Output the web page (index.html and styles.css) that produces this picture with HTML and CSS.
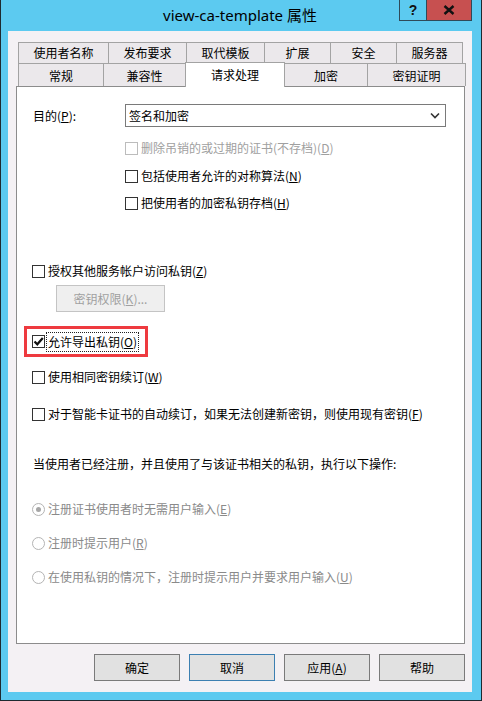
FILE: index.html
```html
<!DOCTYPE html>
<html lang="zh-CN">
<head>
<meta charset="utf-8">
<title>view-ca-template 属性</title>
<link rel="stylesheet" href="styles.css">
</head>
<body>
<div class="window">
  <div class="titlebar">
    <span></span>
    <div class="title">view-ca-template 属性</div>
    <div class="controls">
      <div class="ctl ctl-help">?</div>
      <div class="ctl ctl-close">
        <svg width="12" height="10" viewBox="0 0 12 10"><path d="M1.5 1 L10.5 9 M10.5 1 L1.5 9" stroke="#111" stroke-width="2.4" fill="none"/></svg>
      </div>
    </div>
  </div>
  <div class="client">
    <div class="tabrow row1">
      <div class="tab w91">使用者名称</div>
      <div class="tab w79">发布要求</div>
      <div class="tab w79">取代模板</div>
      <div class="tab w67">扩展</div>
      <div class="tab w67">安全</div>
      <div class="tab w67">服务器</div>
    </div>
    <div class="tabrow row2">
      <div class="tab w86">常规</div>
      <div class="tab w83">兼容性</div>
      <div class="tab tab-sel w100">请求处理</div>
      <div class="tab w84">加密</div>
      <div class="tab w99">密钥证明</div>
    </div>
    <div class="panel">
      <div class="row purpose">
        <span class="label">目的(<u>P</u>):</span>
        <div class="combo">
          <span>签名和加密</span>
          <svg width="10" height="7" viewBox="0 0 10 7"><path d="M1 1.5 L5 5.5 L9 1.5" stroke="#333" stroke-width="1.6" fill="none"/></svg>
        </div>
      </div>
      <div class="row indent disabled mt11">
        <span class="cb cb-dis"></span><span>删除吊销的或过期的证书(不存档)(<u>D</u>)</span>
      </div>
      <div class="row indent mt8">
        <span class="cb"></span><span>包括使用者允许的对称算法(<u>N</u>)</span>
      </div>
      <div class="row indent mt7">
        <span class="cb"></span><span>把使用者的加密私钥存档(<u>H</u>)</span>
      </div>
      <div class="row mt48">
        <span class="cb"></span><span>授权其他服务帐户访问私钥(<u>Z</u>)</span>
      </div>
      <div class="keybtn">密钥权限(<u>K</u>)...</div>
      <div class="highlight">
        <span class="cb">
          <svg width="11" height="11" viewBox="0 0 11 11"><path d="M1.5 5.5 L4.3 8.3 L9.8 2" stroke="#111" stroke-width="2.2" fill="none"/></svg>
        </span><span class="focus">允许导出私钥(<u>O</u>)</span>
      </div>
      <div class="row mt10">
        <span class="cb"></span><span>使用相同密钥续订(<u>W</u>)</span>
      </div>
      <div class="row mt17">
        <span class="cb"></span><span>对于智能卡证书的自动续订，如果无法创建新密钥，则使用现有密钥(<u>F</u>)</span>
      </div>
      <div class="row note mt30">当使用者已经注册，并且使用了与该证书相关的私钥，执行以下操作:</div>
      <div class="row disabled2 mt25">
        <span class="rb rb-on"></span><span>注册证书使用者时无需用户输入(<u>E</u>)</span>
      </div>
      <div class="row disabled2 mt14">
        <span class="rb"></span><span>注册时提示用户(<u>R</u>)</span>
      </div>
      <div class="row disabled2 mt14">
        <span class="rb"></span><span>在使用私钥的情况下，注册时提示用户并要求用户输入(<u>U</u>)</span>
      </div>
    </div>
    <div class="buttons">
      <div class="btn">确定</div>
      <div class="btn btn-default">取消</div>
      <div class="btn">应用(<u>A</u>)</div>
      <div class="btn">帮助</div>
    </div>
  </div>
</div>
</body>
</html>
```

FILE: styles.css
```css
* { box-sizing: border-box; }
html, body { margin: 0; padding: 0; background: #ffffff; }
body {
  font-family: "Noto Sans CJK SC", "Noto Sans", sans-serif;
  font-size: 12px;
  color: #000;
}
u { text-underline-offset: 1px; }

.window {
  width: 482px;
  height: 701px;
  background: #5ccaf0;
  border-left: 1px solid #1e2a30;
  border-right: 1px solid #1e2a30;
  border-bottom: 1px solid #1e2a30;
  padding: 0 9px 8px 7px;
  display: flex;
  flex-direction: column;
}

.titlebar {
  height: 31px;
  display: grid;
  grid-template-columns: 1fr auto 1fr;
  flex: none;
}
.title {
  font-family: "Noto Sans", "Noto Sans CJK SC", sans-serif;
  font-size: 15px;
  line-height: 31px;
  color: #000;
  padding-bottom: 1px;
}
.controls {
  justify-self: end;
  align-self: start;
  display: flex;
  height: 21px;
}
.ctl {
  height: 21px;
  display: flex;
  align-items: center;
  justify-content: center;
  border: 1px solid #2f4a58;
  border-top: none;
}
.ctl-help {
  width: 28px;
  background: #5ccaf0;
  font-family: "Liberation Sans", sans-serif;
  font-weight: bold;
  font-size: 14px;
  color: #111;
}
.ctl-close {
  width: 45px;
  background: #c75050;
  border-left: none;
}

.client {
  flex: none;
  height: 661px;
  background: #f4f1f4;
  padding-top: 11px;
  display: flex;
  flex-direction: column;
}

.tabrow {
  display: flex;
  margin-left: 10px;
  align-items: flex-start;
}
.row1 { height: 21px; }
.row2 { height: 23px; }
.tab {
  height: 100%;
  background: #ebe8eb;
  border: 1px solid #a3a3a3;
  border-bottom: none;
  margin-left: -1px;
  display: flex;
  align-items: center;
  justify-content: center;
  line-height: 16px;
  white-space: nowrap;
}
.tab:first-child { margin-left: 0; }
.row2 .tab { padding-top: 1px; }
.tab-sel {
  background: #ffffff;
  height: 25px;
  margin-top: -1px;
  position: relative;
  z-index: 1;
  padding-top: 0;
  padding-bottom: 2px;
}
.w67 { width: 67px; }
.w79 { width: 79px; }
.w91 { width: 91px; }
.w83 { width: 83px; }
.w84 { width: 84px; }
.w86 { width: 86px; }
.w99 { width: 99px; }
.w100 { width: 100px; }

.panel {
  height: 558px;
  margin: 0 7px 0 8px;
  background: #ffffff;
  border: 1px solid #8c8c8c;
  padding-left: 15px;
  display: flex;
  flex-direction: column;
  align-items: flex-start;
}

.row {
  display: flex;
  align-items: center;
  height: 20px;
  line-height: 16px;
  white-space: nowrap;
}
.purpose {
  margin-top: 17px;
  height: 23px;
}
.purpose .label {
  width: 93px;
  padding-left: 1px;
}
.combo {
  width: 321px;
  height: 23px;
  border: 1px solid #7a7a7a;
  background: #fff;
  display: flex;
  align-items: center;
  justify-content: space-between;
  padding: 0 5px 0 3px;
}
.indent { margin-left: 93px; }
.mt7 { margin-top: 7px; }
.mt8 { margin-top: 8px; }
.mt10 { margin-top: 10px; }
.mt11 { margin-top: 11px; }
.mt14 { margin-top: 14px; }
.mt17 { margin-top: 17px; }
.mt25 { margin-top: 25px; }
.mt30 { margin-top: 30px; }
.mt48 { margin-top: 48px; }

.cb {
  width: 13px;
  height: 13px;
  border: 1px solid #333;
  background: #fff;
  margin-right: 3px;
  flex: none;
  display: flex;
  align-items: center;
  justify-content: center;
}
.cb-dis { border-color: #bcbcbc; }
.disabled { color: #a0a0a0; }
.disabled2 { color: #8a8a8a; }

.rb {
  width: 13px;
  height: 13px;
  border: 1px solid #b4b4b4;
  border-radius: 50%;
  background: #fff;
  margin-right: 3px;
  flex: none;
  display: flex;
  align-items: center;
  justify-content: center;
}
.rb-on::after {
  content: "";
  width: 5px;
  height: 5px;
  border-radius: 50%;
  background: #a6a6a6;
}
.note { padding-left: 1px; }

.keybtn {
  margin-top: 4px;
  margin-left: 24px;
  width: 109px;
  height: 27px;
  background: #efefef;
  border: 1px solid #c4c4c4;
  color: #a0a0a0;
  display: flex;
  align-items: center;
  justify-content: center;
  line-height: 16px;
}

.highlight {
  margin-top: 14px;
  margin-left: -8px;
  width: 124px;
  height: 31px;
  border: 3px solid #ee3a3f;
  padding-left: 5px;
  display: flex;
  align-items: center;
  white-space: nowrap;
  line-height: 16px;
}
.highlight .cb { margin-right: 2px; }
.focus {
  outline: 1px dotted #222;
  padding: 0 1px;
  height: 18px;
  display: flex;
  align-items: center;
}

.buttons {
  margin-top: 10px;
  margin-right: 7px;
  display: flex;
  justify-content: flex-end;
  gap: 9px;
}
.btn {
  width: 86px;
  height: 27px;
  background: #e1e1e1;
  border: 1px solid #7a7a7a;
  display: flex;
  align-items: center;
  justify-content: center;
  line-height: 16px;
}
.btn-default { border-color: #3c7fb1; }
```
